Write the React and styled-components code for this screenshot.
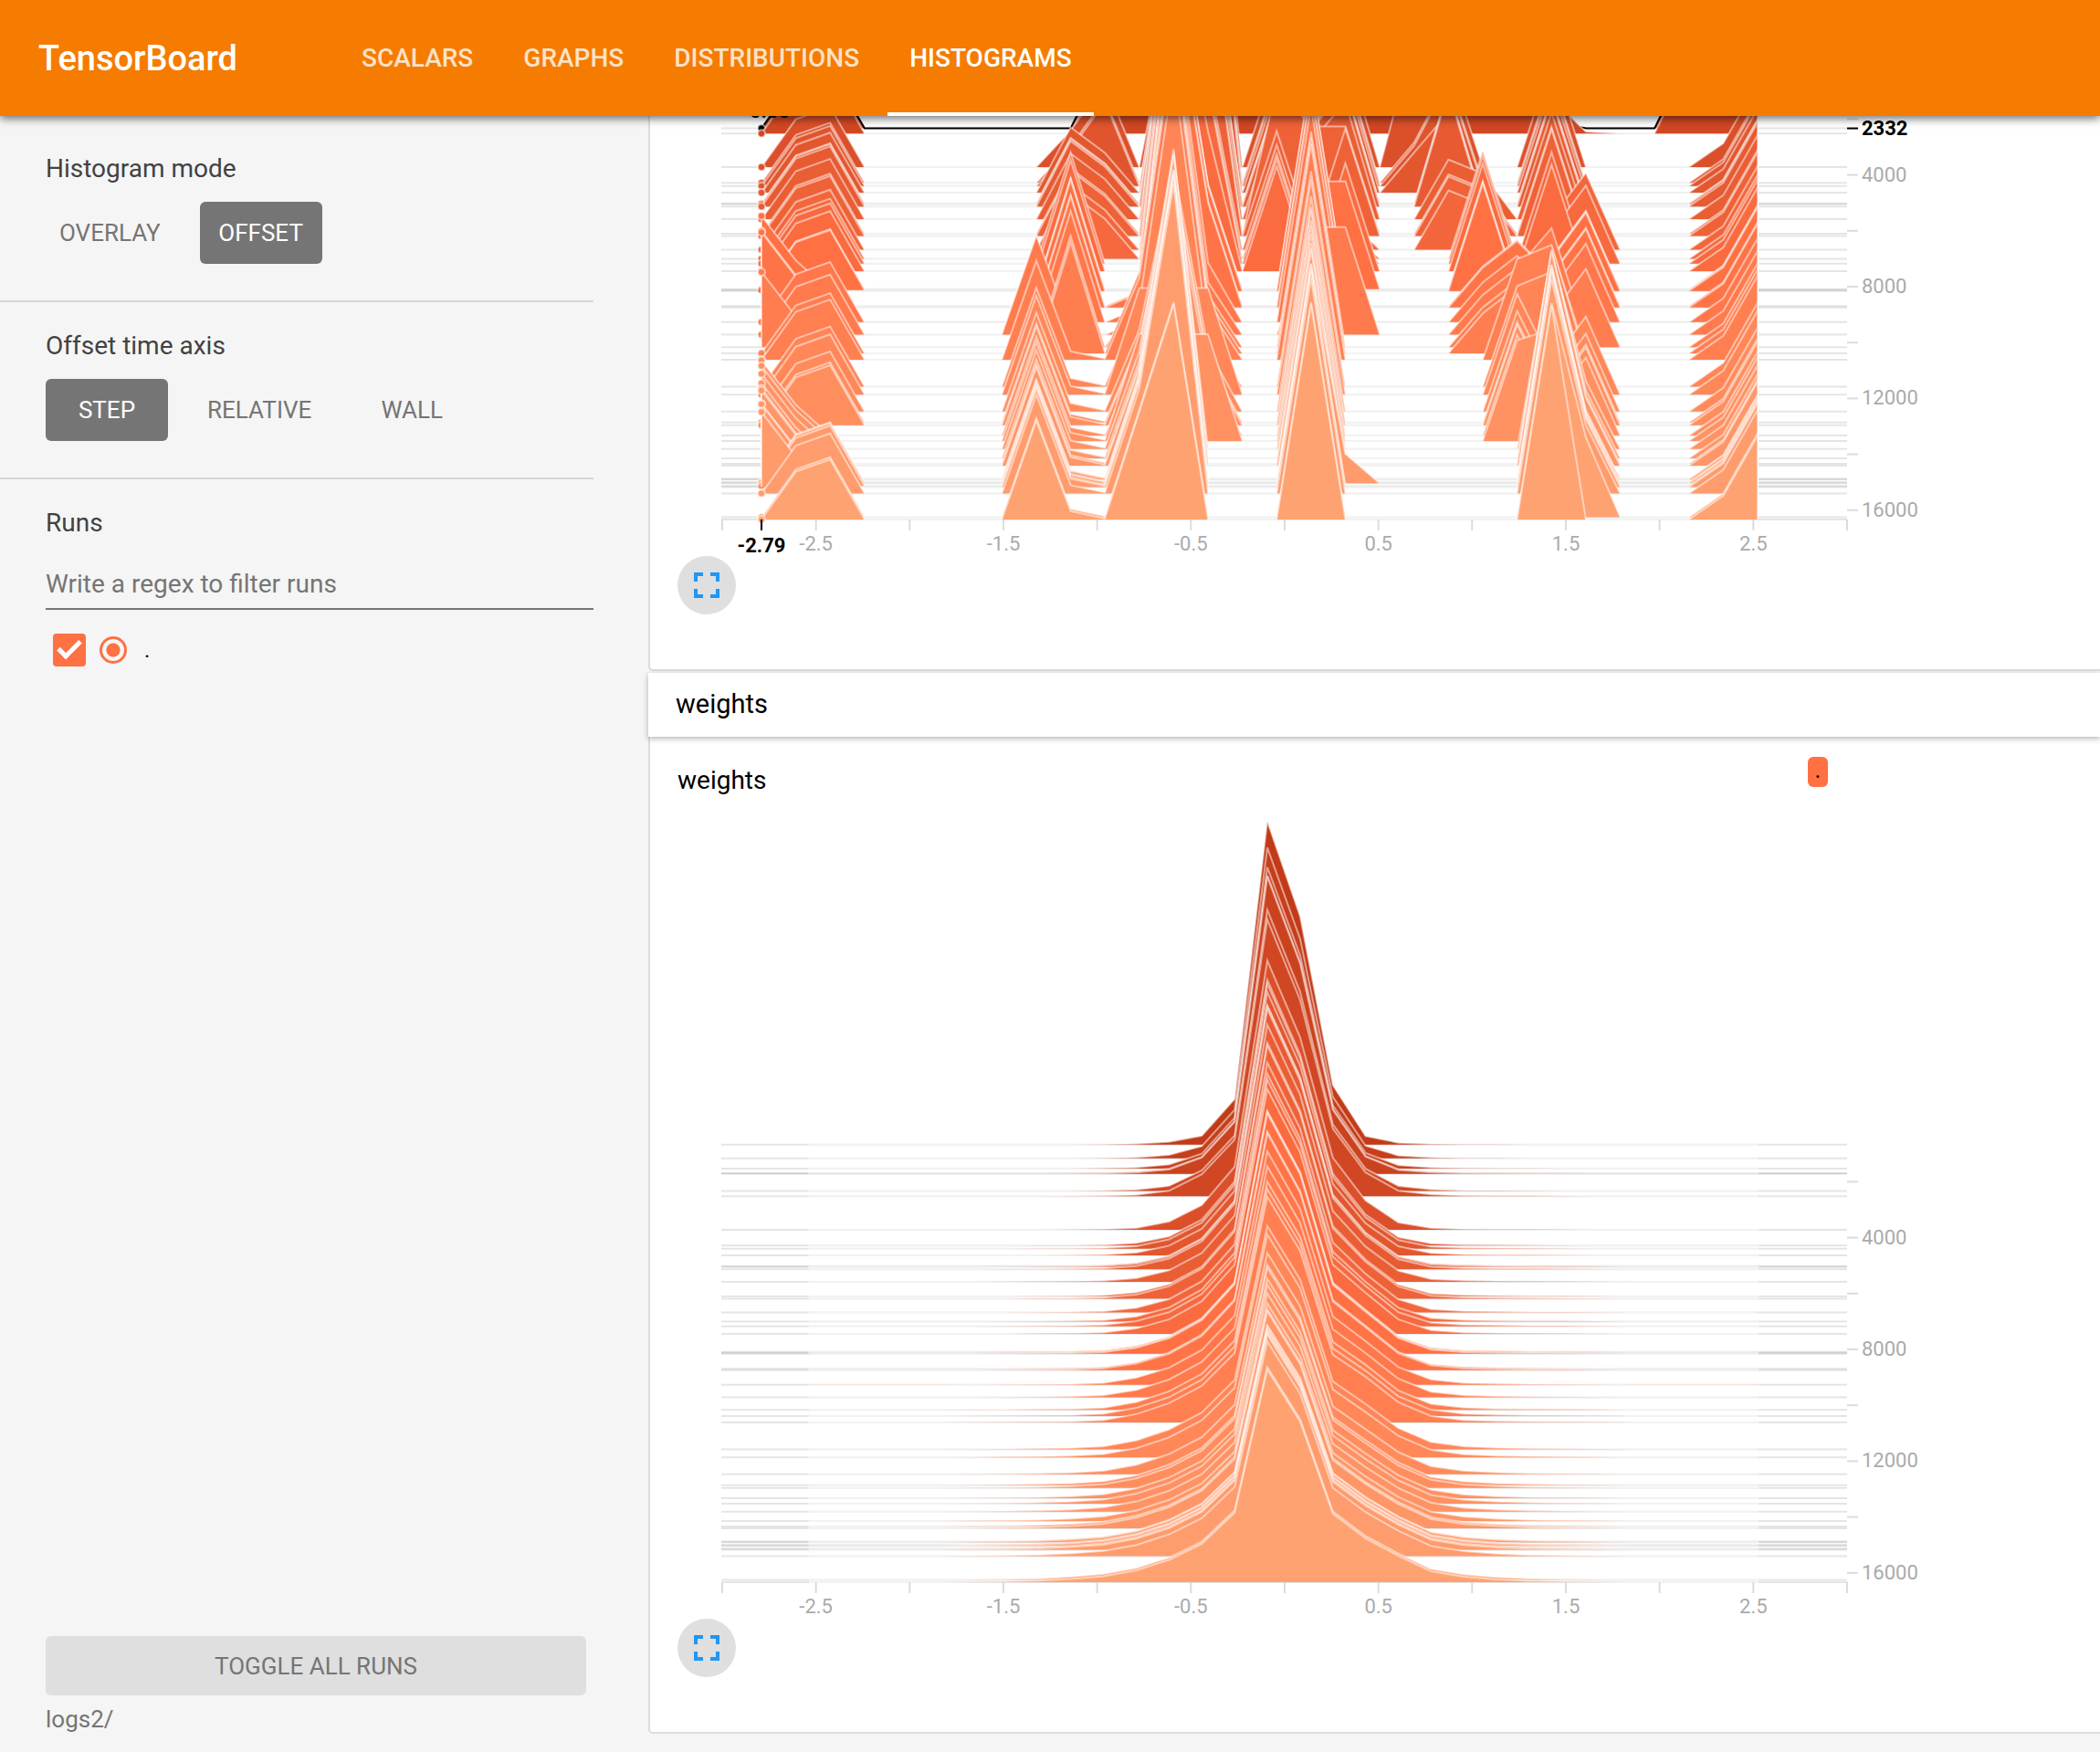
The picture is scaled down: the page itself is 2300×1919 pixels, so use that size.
import React from "react";
import styled, { createGlobalStyle } from "styled-components";

const GlobalStyle = createGlobalStyle`
  * { box-sizing: border-box; }
  body { margin: 0; background: #f5f5f5; font-family: Roboto, sans-serif; }
`;

/* ---------- page frame ---------- */

const Page = styled.div`
  display: flex;
  flex-direction: column;
  height: 100vh;
  overflow: hidden;
`;

const Toolbar = styled.header`
  position: relative;
  z-index: 2;
  flex: none;
  display: flex;
  align-items: stretch;
  height: 127px;
  padding-left: 42px;
  background: #f57c00;
  box-shadow: 0 3px 9px rgba(0, 0, 0, 0.55);
`;

const Brand = styled.h1`
  display: flex;
  align-items: center;
  width: 330px;
  margin: 0;
  color: #fff;
  font-size: 38px;
  font-weight: 500;
`;

const Tabs = styled.nav`
  display: flex;
  gap: 7px;
`;

const Tab = styled.a`
  display: flex;
  align-items: center;
  padding: 4px 24px 0;
  border-bottom: 4px solid ${(p) => (p.$active ? "#fff" : "transparent")};
  color: ${(p) => (p.$active ? "#fff" : "rgba(255, 255, 255, 0.78)")};
  font-size: 28px;
  font-weight: 500;
  text-decoration: none;
`;

const Body = styled.div`
  flex: 1;
  display: flex;
  min-height: 0;
`;

/* ---------- sidebar ---------- */

const Sidebar = styled.aside`
  flex: none;
  display: flex;
  flex-direction: column;
  width: 710px;
  padding: 10px 60px 20px 0;
`;

const Section = styled.section`
  padding: 31px 0 40px 50px;
  border-bottom: ${(p) => (p.$last ? "none" : "2px solid #d6d6d6")};
`;

const SectionTitle = styled.h2`
  display: block;
  margin: 0 0 19px;
  color: #424242;
  font-size: 28px;
  line-height: 34px;
  font-weight: 400;
`;

const Choices = styled.div`
  display: flex;
  gap: 28px;
`;

const Choice = styled.button`
  min-width: 134px;
  height: 68px;
  padding: 0 15px;
  border: 0;
  border-radius: 6px;
  background: ${(p) => (p.$active ? "#757575" : "transparent")};
  color: ${(p) => (p.$active ? "#fff" : "#757575")};
  font: 400 26px Roboto, sans-serif;
`;

const RunFilter = styled.input`
  display: block;
  width: 100%;
  height: 59px;
  padding: 4px 0 0;
  border: 0;
  border-bottom: 2px solid #757575;
  background: transparent;
  color: #212121;
  font: 400 28px Roboto, sans-serif;
  &::placeholder { color: #757575; opacity: 1; }
`;

const RunRow = styled.div`
  display: flex;
  align-items: center;
  gap: 15px;
  padding: 26px 8px 0;
`;

const RunCheckbox = styled.input`
  appearance: none;
  display: grid;
  justify-content: center;
  align-content: start;
  width: 36px;
  height: 36px;
  margin: 0;
  border-radius: 4px;
  background: #ff7043;
  &::after {
    content: "";
    box-sizing: border-box;
    width: 14px;
    height: 25px;
    margin-top: 2px;
    border: solid #fff;
    border-width: 0 5px 5px 0;
    transform: rotate(45deg);
  }
`;

const RunRadio = styled.input`
  appearance: none;
  width: 30px;
  height: 30px;
  margin: 0;
  border: 3px solid #ff7043;
  border-radius: 50%;
  background: radial-gradient(circle, #ff7043 7px, transparent 8px);
`;

const RunName = styled.label`
  padding-left: 4px;
  color: #000;
  font-size: 24px;
  line-height: 36px;
`;

const SidebarFooter = styled.footer`
  margin-top: auto;
  padding-left: 50px;
  color: #757575;
  font-size: 26px;
  line-height: 32px;
`;

const ToggleAll = styled.button`
  display: block;
  width: calc(100% - 8px);
  height: 65px;
  margin-bottom: 10px;
  border: 0;
  border-radius: 6px;
  background: #dfdfdf;
  color: #757575;
  font: 400 26px Roboto, sans-serif;
`;

/* ---------- chart pane ---------- */

const Pane = styled.main`
  flex: 1;
  min-width: 0;
  overflow: hidden;
  margin-left: -12px;
  padding-left: 12px;
`;

const Card = styled.section`
  padding: ${(p) => (p.$titled ? "22px 0 60px 30px" : "0 0 60px 30px")};
  border: 2px solid #dcdcdc;
  border-width: 0 0 2px 2px;
  border-radius: 0 0 0 5px;
  background: #fff;
`;

const GroupBar = styled.h2`
  position: relative;
  display: flex;
  align-items: center;
  height: 70px;
  margin: 2px 0 0;
  padding: 0 0 2px 30px;
  background: #fff;
  box-shadow: 0 2px 6px rgba(0, 0, 0, 0.3);
  color: #000;
  font-size: 29px;
  font-weight: 400;
`;

const ChartHead = styled.div`
  display: flex;
  justify-content: space-between;
  align-items: flex-start;
  width: 1260px;
  height: 61px;
`;

const ChartTitle = styled.h3`
  margin: 0;
  padding-top: 9px;
  font-size: 28px;
  line-height: 34px;
  font-weight: 400;
`;

const RunChip = styled.span`
  width: 22px;
  height: 33px;
  border-radius: 6px;
  background: #ff7043;
  color: #000;
  font-size: 26px;
  line-height: 28px;
  text-align: center;
`;

const Plot = styled.svg`
  display: block;
  font-family: Roboto, sans-serif;
  font-size: 22px;
`;

const ExpandButton = styled.button`
  display: grid;
  place-items: center;
  width: 64px;
  height: 64px;
  padding: 0;
  border: 0;
  border-radius: 50%;
  background: #dfdfdf;
`;

/* ---------- histogram data ---------- */

const LAST_STEP = 16333;
const STEPS = [
  670, 1163, 1530, 1690, 1713, 2332, 2516, 3720, 4282, 4397, 4637, 5016, 5050,
  5130, 5578, 6105, 6186, 6679, 7000, 7172, 7447, 8089, 8124, 8158, 8697, 8743,
  9270, 9717, 10164, 10382, 10612, 11575, 11861, 12469, 12859, 12962, 13329,
  13524, 13811, 14143, 14338, 14407, 14877, 14900, 15003, 15038, 15129, 15175,
  15404, 16253, 16333,
];

// Per bin: [first step, height] pairs; a height holds until the next pair.
const BIAS_BINS = {
  0: [[0, 0], [8158, 215], [9000, 0], [10000, 215], [10300, 0], [13200, 215], [14950, 0], [15150, 215], [15300, 0]],
  1: [[0, 137], [8158, 88], [9000, 137], [10000, 88], [10300, 137], [13200, 88], [14950, 137], [15150, 88], [15300, 137]],
  2: [[0, 172], [8158, 0], [9000, 172], [10000, 0], [10300, 172], [13200, 0], [14950, 172], [15150, 0], [15300, 172]],
  8: [[0, 0], [9500, 283], [10000, 0], [10500, 283]],
  9: [[0, 0], [3000, 105], [4500, 187], [7100, 318], [9500, 22], [10000, 318], [10500, 24]],
  10: [[0, 200], [3000, 240], [4500, 114], [7100, 0], [10500, 3]],
  11: [[0, 200], [3000, 0], [8500, 42], [10000, 150], [10380, 235], [11800, 305], [12400, 235], [13500, 307], [13700, 280], [14800, 300], [16000, 308]],
  12: [[0, 300], [3000, 500], [4500, 700], [6000, 900], [11800, 305], [12400, 700], [13500, 307], [13700, 850], [14000, 885], [16000, 616]],
  13: [[0, 250], [3000, 900], [5000, 700], [6200, 500], [7400, 400], [8000, 300], [9000, 170], [9500, 150], [11800, 305], [12400, 180], [13500, 305], [13700, 0]],
  14: [[0, 200], [3000, 0]],
  15: [[0, 250], [3000, 300], [6100, 420], [6150, 300], [8000, 0]],
  16: [[0, 250], [3000, 220], [6100, 307], [6150, 0], [8000, 308], [8100, 616], [9700, 308], [10000, 616]],
  17: [[0, 60], [3000, 335], [6100, 307], [6600, 95], [7400, 309], [8100, 0], [9700, 308], [10000, 0], [15020, 84], [15100, 0]],
  18: [[0, 200], [3000, 0]],
  19: [[0, 200], [3000, 370], [4000, 115], [4800, 0]],
  20: [[0, 250], [3000, 300], [4500, 230], [4800, 330], [5400, 170], [6900, 0]],
  21: [[0, 150], [3000, 0], [5400, 130], [6900, 308], [8400, 114], [10500, 0]],
  22: [[0, 250], [3000, 0], [8400, 190], [10500, 288], [13600, 0]],
  23: [[0, 20], [2400, 100], [3000, 305], [6600, 91], [6900, 305], [7100, 91], [7400, 305], [8000, 91], [9500, 305], [10000, 91], [10300, 305], [10500, 328], [11800, 90], [13500, 320], [13700, 560], [14000, 590], [14300, 613]],
  24: [[0, 0], [2400, 5], [3000, 0], [6600, 220], [6900, 0], [7100, 223], [7400, 0], [8000, 224], [9500, 0], [10000, 224], [10300, 0], [11800, 223], [13500, 0], [13700, 195], [16200, 229], [16300, 0]],
  27: [[0, 200], [3000, 0]],
  28: [[0, 250], [3000, 68]],
  29: [[0, 300], [3000, 240]],
};

const BIN_COUNT = 30;

function biasHeights(step) {
  return Array.from({ length: BIN_COUNT }, (_, bin) => {
    const runs = BIAS_BINS[bin] || [[0, 0]];
    const run = runs.filter(([from]) => from <= step).pop();
    return run[1] / 2.613;
  });
}

// Key frames of the weight distribution, bins 5 to 24; steps between are interpolated.
const WEIGHT_FRAMES = [
  [670, [0, 0, 0, 0, 0.3, 1, 3, 9.6, 50, 354, 250, 65, 9.3, 2, 0.7, 0.3, 0.1, 0, 0, 0]],
  [2516, [0, 0, 0, 0.2, 0.5, 1.5, 6, 24, 62, 303, 215, 74, 26, 6, 2, 0.7, 0.5, 0.4, 0.2, 0]],
  [3720, [0, 0, 0.1, 0.3, 0.7, 2, 9, 27, 69, 295, 211, 79, 32, 8, 2, 0.8, 0.5, 0.4, 0.3, 0]],
  [7447, [0, 0.2, 0.5, 0.8, 1.5, 6, 16, 36, 76, 268, 199, 76, 45, 16, 4, 1.7, 1.1, 0.8, 0.6, 0.3]],
  [10612, [0.2, 0.4, 0.7, 1, 2.5, 9, 21, 40, 76, 247, 188, 74, 50, 22, 7, 2.5, 1.4, 0.9, 0.7, 0.4]],
  [16333, [0.5, 0.9, 1.7, 3.5, 6.5, 13, 24.5, 42, 76, 233, 176, 75, 48, 29, 12, 6, 3, 1.5, 0.9, 0.5]],
];

function weightHeights(step) {
  const next = Math.max(1, WEIGHT_FRAMES.findIndex(([s]) => s >= step));
  const [s0, a] = WEIGHT_FRAMES[next - 1];
  const [s1, b] = WEIGHT_FRAMES[next];
  const t = (step - s0) / (s1 - s0);
  return Array.from({ length: BIN_COUNT }, (_, bin) => {
    const i = bin - 5;
    return i < 0 || i >= a.length ? 0 : a[i] + (b[i] - a[i]) * t;
  });
}

/* ---------- histogram drawing ---------- */

const PLOT_LEFT = 49;
const PLOT_WIDTH = 1232;
const PLOT_RIGHT = PLOT_LEFT + PLOT_WIDTH;
const PX_PER_STEP = 0.0306;

const stepY = (step) => -(LAST_STEP - step) * PX_PER_STEP;
const valueX = (value) => PLOT_LEFT + ((value + 3) / 6) * PLOT_WIDTH;

const COLOR_STOPS = [
  [670, [194, 58, 24]],
  [8100, [255, 112, 67]],
  [16333, [255, 162, 114]],
];

function stepColor(step) {
  const [lo, hi] = step < 8100 ? COLOR_STOPS.slice(0, 2) : COLOR_STOPS.slice(1);
  const t = (step - lo[0]) / (hi[0] - lo[0]);
  return `rgb(${lo[1].map((c, i) => Math.round(c + (hi[1][i] - c) * t)).join(",")})`;
}

function Histogram({ label, height, firstX, binWidth, heightsAt, hovered }) {
  const xTicks = Array.from({ length: 13 }, (_, i) => -3 + i * 0.5);
  const yTicks = [2000, 4000, 6000, 8000, 10000, 12000, 14000, 16000];
  return (
    <Plot
      width={1380}
      height={height + 40}
      viewBox={`0 ${-height} 1380 ${height + 40}`}
      role="img"
      aria-label={label}
    >
      {STEPS.map((step) => {
        const y = stepY(step);
        const heights = heightsAt(step);
        const points = heights.map(
          (h, i) => `${(firstX + i * binWidth).toFixed(1)},${(y - h).toFixed(1)}`
        );
        const lastX = firstX + (BIN_COUNT - 1) * binWidth;
        const isHovered = hovered && step === hovered.step;
        return (
          <g key={step}>
            <line x1={PLOT_LEFT - 1} x2={PLOT_RIGHT} y1={y} y2={y} stroke="#000" strokeOpacity="0.1" strokeWidth="2" />
            <path
              d={`M${firstX},${y}L${points.join("L")}L${lastX},${y}`}
              fill={stepColor(step)}
              stroke={isHovered ? "#000" : "#fff"}
              strokeOpacity={isHovered ? 1 : 0.5}
              strokeWidth="2"
            />
            {hovered && (
              <circle
                cx={firstX}
                cy={y - heights[0]}
                r="4"
                fill={isHovered ? "#000" : stepColor(step)}
                stroke="#fff"
                strokeOpacity="0.5"
                strokeWidth="2"
              />
            )}
          </g>
        );
      })}
      {xTicks.map((v) => (
        <line key={v} x1={valueX(v)} x2={valueX(v)} y1="0" y2="12" stroke="#dcdcdc" strokeWidth="2" />
      ))}
      {[-2.5, -1.5, -0.5, 0.5, 1.5, 2.5].map((v) => (
        <text key={v} x={valueX(v)} y="34" fill="#aaa" textAnchor="middle">{v}</text>
      ))}
      {yTicks.map((s) => (
        <line key={s} x1={PLOT_RIGHT} x2={PLOT_RIGHT + 12} y1={stepY(s)} y2={stepY(s)} stroke="#dcdcdc" strokeWidth="2" />
      ))}
      {yTicks.filter((s) => s % 4000 === 0).map((s) => (
        <text key={s} x={PLOT_RIGHT + 16} y={stepY(s) + 7} fill="#aaa">{s}</text>
      ))}
      {hovered && (
        <g fill="#000" stroke="none" fontWeight="700">
          <rect x={firstX - 1} y="0" width="2" height="12" />
          <text x={firstX} y="36" textAnchor="middle">{hovered.value}</text>
          <rect x={PLOT_RIGHT} y={stepY(hovered.step) - 1} width="12" height="2" />
          <text x={PLOT_RIGHT + 16} y={stepY(hovered.step) + 7}>{hovered.step}</text>
          <text x={firstX + 9} y={stepY(hovered.step) - 12} textAnchor="middle">{hovered.count}</text>
        </g>
      )}
    </Plot>
  );
}

function Expand() {
  return (
    <ExpandButton type="button" aria-label="Toggle chart size">
      <svg width="48" height="48" viewBox="0 0 24 24" fill="#2196f3" aria-hidden="true">
        <path d="M7 14H5v5h5v-2H7v-3zm-2-4h2V7h3V5H5v5zm12 7h-3v2h5v-5h-2v3zM14 5v2h3v3h2V5h-5z" />
      </svg>
    </ExpandButton>
  );
}

export default function App() {
  return (
    <Page>
      <GlobalStyle />
      <Toolbar>
        <Brand>TensorBoard</Brand>
        <Tabs>
          <Tab href="#scalars">SCALARS</Tab>
          <Tab href="#graphs">GRAPHS</Tab>
          <Tab href="#distributions">DISTRIBUTIONS</Tab>
          <Tab href="#histograms" $active aria-current="page">HISTOGRAMS</Tab>
        </Tabs>
      </Toolbar>
      <Body>
        <Sidebar>
          <Section>
            <SectionTitle>Histogram mode</SectionTitle>
            <Choices>
              <Choice type="button">OVERLAY</Choice>
              <Choice type="button" $active>OFFSET</Choice>
            </Choices>
          </Section>
          <Section>
            <SectionTitle>Offset time axis</SectionTitle>
            <Choices>
              <Choice type="button" $active>STEP</Choice>
              <Choice type="button">RELATIVE</Choice>
              <Choice type="button">WALL</Choice>
            </Choices>
          </Section>
          <Section $last>
            <SectionTitle as="label" htmlFor="run-filter">Runs</SectionTitle>
            <RunFilter id="run-filter" placeholder="Write a regex to filter runs" />
            <RunRow>
              <RunCheckbox type="checkbox" id="run-root" defaultChecked />
              <RunRadio type="radio" name="run" aria-label="Show only this run" defaultChecked />
              <RunName htmlFor="run-root">.</RunName>
            </RunRow>
          </Section>
          <SidebarFooter>
            <ToggleAll type="button">TOGGLE ALL RUNS</ToggleAll>
            logs2/
          </SidebarFooter>
        </Sidebar>
        <Pane>
          <Card>
            <Histogram
              label="bias histogram"
              height={442}
              firstX={92}
              binWidth={37.62}
              heightsAt={biasHeights}
              hovered={{ step: 2332, value: "-2.79", count: "0.00" }}
            />
            <Expand />
          </Card>
          <GroupBar>weights</GroupBar>
          <Card $titled>
            <ChartHead>
              <ChartTitle>weights</ChartTitle>
              <RunChip>.</RunChip>
            </ChartHead>
            <Histogram
              label="weights histogram"
              height={843}
              firstX={144}
              binWidth={35.86}
              heightsAt={weightHeights}
            />
            <Expand />
          </Card>
        </Pane>
      </Body>
    </Page>
  );
}
